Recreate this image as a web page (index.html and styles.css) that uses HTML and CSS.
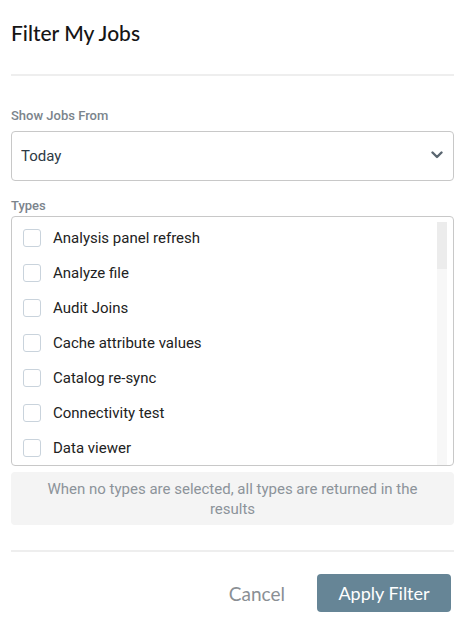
FILE: index.html
```html
<!DOCTYPE html>
<html lang="en">
<head>
  <meta charset="UTF-8">
  <meta name="viewport" content="width=device-width, initial-scale=1.0">
  <title>Filter My Jobs</title>
  <link rel="stylesheet" href="styles.css">
</head>
<body>

  <div class="dialog">
    <!-- Header -->
    <div class="dialog-header">
      <h2>Filter My Jobs</h2>
    </div>

    <!-- Date range -->
    <div class="field">
      <label class="field-label" for="jobs-from">Show Jobs From</label>
      <div class="select-wrap">
        <select id="jobs-from">
          <option>Today</option>
          <option>Yesterday</option>
          <option>Last 7 days</option>
          <option>Last 30 days</option>
        </select>
        <svg class="chevron" width="12" height="8" viewBox="0 0 12 8">
          <path d="M1.5 1.5 L6 6 L10.5 1.5" fill="none" stroke="#5a6670" stroke-width="2.4" stroke-linecap="round" stroke-linejoin="round"/>
        </svg>
      </div>
    </div>

    <!-- Job types -->
    <div class="field field-types">
      <span class="field-label">Types</span>
      <div class="type-box">
        <ul class="type-list" id="type-list"></ul>
        <div class="scroll-track"><div class="scroll-thumb" id="scroll-thumb"></div></div>
      </div>
    </div>

    <div class="hint">When no types are selected, all types are returned in the results</div>

    <!-- Footer -->
    <div class="dialog-footer">
      <button class="btn btn-link" type="button">Cancel</button>
      <button class="btn btn-primary" type="button">Apply Filter</button>
    </div>
  </div>

  <script>
    const jobTypes = [
      'Analysis panel refresh', 'Analyze file', 'Audit Joins', 'Cache attribute values',
      'Catalog re-sync', 'Connectivity test', 'Data viewer', 'Delete cube',
      'Delete project', 'Deploy package', 'Export dashboard', 'Export metadata',
      'Export report', 'File upload', 'Import dashboard', 'Import metadata',
      'Index rebuild', 'Load cube', 'Merge datasets', 'Metadata refresh',
      'Migrate project', 'Notification delivery', 'Publish cube', 'Purge cache',
      'Refresh dataset', 'Rename project', 'Report execution', 'Schedule run',
      'Schema update', 'Security sync', 'Send email', 'Snapshot create',
      'Statistics update', 'Subscription delivery', 'Upgrade project', 'Validate model'
    ];

    const list = document.getElementById('type-list');
    const thumb = document.getElementById('scroll-thumb');

    jobTypes.forEach((name, i) => {
      const li = document.createElement('li');
      li.innerHTML = `<label class="type-row"><input type="checkbox" id="type-${i}"><span class="box"></span><span>${name}</span></label>`;
      list.appendChild(li);
    });

    // keep the slim scrollbar in step with the list
    function updateThumb() {
      const track = thumb.parentElement.clientHeight;
      const ratio = list.clientHeight / list.scrollHeight;
      const size = Math.max(24, Math.round(track * ratio));
      const maxScroll = list.scrollHeight - list.clientHeight;
      const offset = maxScroll ? (list.scrollTop / maxScroll) * (track - size) : 0;
      thumb.style.height = size + 'px';
      thumb.style.transform = `translateY(${offset}px)`;
    }

    list.addEventListener('scroll', updateThumb);
    updateThumb();
  </script>
</body>
</html>
```

FILE: styles.css
```css
/* Base styling */
body {
  margin: 0;
  font-family: 'Roboto', 'Liberation Sans', sans-serif;
  background: #ffffff;
  color: #222;
}

.dialog {
  width: 465px;
  padding: 0 11px;
  box-sizing: border-box;
}

.dialog-header {
  padding: 20px 0 28px;
  border-bottom: 2px solid #eeeeee;
}

.dialog-header h2 {
  margin: 0;
  font-family: 'Lato', sans-serif;
  font-weight: 500;
  font-size: 21px;
  line-height: 26px;
  color: #151515;
}

.field {
  margin-top: 32px;
}

.field-label {
  display: block;
  font-size: 13px;
  line-height: 16px;
  font-weight: 500;
  color: #7b848c;
  margin-bottom: 7px;
}

.field-types {
  margin-top: 17px;
}

.field-types .field-label {
  margin-bottom: 2px;
}

/* Select */
.select-wrap {
  position: relative;
}

.select-wrap select {
  width: 100%;
  height: 50px;
  padding: 0 36px 0 9px;
  border: 1px solid #c8c8c8;
  border-radius: 4px;
  background: #fff;
  font-family: 'Roboto', sans-serif;
  font-size: 15px;
  color: #2e3a44;
  appearance: none;
  -webkit-appearance: none;
  box-sizing: border-box;
}

.chevron {
  position: absolute;
  right: 11px;
  top: 20px;
  pointer-events: none;
}

/* Types list */
.type-box {
  position: relative;
  height: 250px;
  border: 1px solid #c8c8c8;
  border-radius: 4px;
  box-sizing: border-box;
  overflow: hidden;
}

.type-list {
  list-style: none;
  margin: 0;
  padding: 3px 20px 19px 0;
  height: 100%;
  overflow-y: scroll;
  scrollbar-width: none;
  box-sizing: border-box;
}

.type-list::-webkit-scrollbar {
  display: none;
}

.scroll-track {
  position: absolute;
  top: 5px;
  bottom: 0;
  right: 6px;
  width: 10px;
  background: #f7f7f7;
}

.scroll-thumb {
  width: 100%;
  background: #ececec;
}

.type-row {
  display: flex;
  align-items: center;
  gap: 12px;
  height: 35px;
  padding-left: 11px;
  font-size: 15px;
  color: #222;
  cursor: pointer;
}

.type-row input {
  display: none;
}

.type-row .box {
  width: 18px;
  height: 18px;
  border: 1px solid #c9d3dc;
  border-radius: 3px;
  box-sizing: border-box;
  background: #fff;
}

.type-row input:checked + .box {
  background: #668596;
  border-color: #668596;
}

/* Hint */
.hint {
  margin-top: 6px;
  padding: 7px 30px 6px;
  background: #f4f4f4;
  border-radius: 4px;
  text-align: center;
  font-size: 15px;
  line-height: 20px;
  color: #8c939a;
}

/* Footer */
.dialog-footer {
  margin-top: 25px;
  padding-top: 22px;
  border-top: 2px solid #eeeeee;
  display: flex;
  justify-content: flex-end;
  align-items: center;
  gap: 14px;
  padding-right: 3px;
}

.btn {
  font-family: 'Lato', sans-serif;
  font-size: 18px;
  height: 38px;
  border: none;
  border-radius: 4px;
  padding: 0 18px;
  cursor: pointer;
}

.btn-link {
  background: transparent;
  color: #8a8f94;
  font-size: 19px;
}

.btn-primary {
  background: #668596;
  color: #fff;
  width: 134px;
}

.btn-primary:hover {
  background: #587485;
}
```
